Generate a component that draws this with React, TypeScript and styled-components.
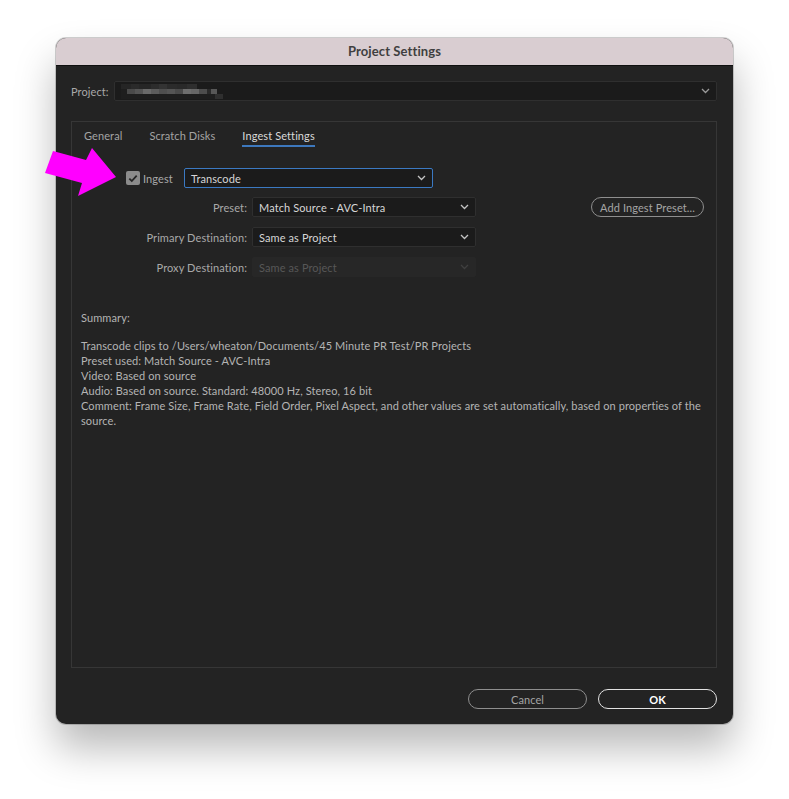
import React from 'react';
import styled, { createGlobalStyle } from 'styled-components';

const Global = createGlobalStyle`
  html, body { margin: 0; padding: 0; background: #ffffff; }
  body { font-family: Lato, "Liberation Sans", sans-serif; letter-spacing: 0.1px; }
`;

const Page = styled.div`
  position: relative;
  width: 789px;
  height: 799px;
  padding: 38px 0 0 56px;
  box-sizing: border-box;
  background: #ffffff;
`;

const Window = styled.div`
  width: 677px;
  height: 686px;
  border-radius: 10px;
  background: #232323;
  box-shadow: 0 24px 40px rgba(0, 0, 0, 0.28), 0 0 0 1px rgba(0, 0, 0, 0.18);
  overflow: hidden;
  display: flex;
  flex-direction: column;
`;

const TitleBar = styled.div`
  height: 28px;
  flex: none;
  background: #d9cdd1;
  border-bottom: 1px solid #101010;
  display: flex;
  align-items: center;
  justify-content: center;
  padding-bottom: 2px;
  box-sizing: border-box;
  font-size: 13px;
  font-weight: 700;
  color: #3f3f3f;
`;

const Body = styled.div`
  flex: 1;
  display: flex;
  flex-direction: column;
  padding: 15px 16px 15px 15px;
  min-height: 0;
`;

const ProjectRow = styled.div`
  display: flex;
  align-items: center;
  height: 20px;
  gap: 5px;
`;

const Label = styled.span<{ $w?: number }>`
  font-size: 11px;
  color: #a9a9a9;
  white-space: nowrap;
  ${(p) => (p.$w ? `width: ${p.$w}px; text-align: right; flex: none;` : '')}
`;

const Select = styled.div<{ $w?: number; $focus?: boolean; $disabled?: boolean }>`
  height: 20px;
  box-sizing: border-box;
  display: flex;
  align-items: center;
  justify-content: space-between;
  padding: 0 6px 0 6px;
  border-radius: 2px;
  font-size: 11px;
  ${(p) => (p.$w ? `width: ${p.$w}px; flex: none;` : 'flex: 1;')}
  background: ${(p) => (p.$disabled ? '#272727' : '#1b1b1b')};
  border: 1px solid ${(p) => (p.$focus ? '#3b79c2' : p.$disabled ? '#272727' : '#2f2f2f')};
  color: ${(p) => (p.$disabled ? '#575757' : '#d6d6d6')};
`;

const Blur = styled.div`
  display: flex;
  flex-direction: column;
`;

const BlurRow = styled.div`
  display: flex;
  height: 5px;
`;

const Px = styled.span<{ $c: string; $w: number }>`
  display: block;
  height: 100%;
  width: ${(p) => p.$w}px;
  background: ${(p) => p.$c};
`;

const Panel = styled.div`
  margin-top: 20px;
  flex: 1;
  border: 1px solid #363636;
  display: flex;
  flex-direction: column;
  min-height: 0;
`;

const Tabs = styled.div`
  display: flex;
  gap: 27px;
  padding-left: 12px;
`;

const Tab = styled.div<{ $active?: boolean }>`
  padding-top: 7px;
  padding-bottom: 2px;
  line-height: 14px;
  font-size: 11px;
  color: ${(p) => (p.$active ? '#dadada' : '#a3a3a3')};
  border-bottom: 2px solid ${(p) => (p.$active ? '#3d78bd' : 'transparent')};
`;

const Form = styled.div`
  margin-top: 21px;
  display: flex;
  flex-direction: column;
  gap: 10px;
`;

const Row = styled.div<{ $tight?: boolean }>`
  display: flex;
  align-items: center;
  height: 20px;
  ${(p) => (p.$tight ? 'margin-bottom: -1px;' : '')}
`;

const CheckWrap = styled.div`
  margin-left: 54px;
  display: flex;
  align-items: center;
  width: 58px;
  flex: none;
  gap: 3px;
`;

const Checkbox = styled.span`
  width: 14px;
  height: 14px;
  border-radius: 2px;
  background: #8b8b8b;
  display: flex;
  align-items: center;
  justify-content: center;
  flex: none;
`;

const FieldGap = styled.span`
  width: 5px;
  flex: none;
`;

const PillButton = styled.div<{ $primary?: boolean; $w: number }>`
  width: ${(p) => p.$w}px;
  height: 20px;
  box-sizing: border-box;
  border-radius: 10px;
  border: 1.5px solid ${(p) => (p.$primary ? '#e2e2e2' : '#8e8e8e')};
  display: flex;
  align-items: center;
  justify-content: center;
  font-size: 11px;
  font-weight: ${(p) => (p.$primary ? 700 : 400)};
  color: ${(p) => (p.$primary ? '#ffffff' : '#a5a5a5')};
  flex: none;
`;

const AddPreset = styled(PillButton)`
  margin-left: auto;
  margin-right: 12px;
`;

const Summary = styled.div`
  margin-top: 33px;
  padding: 0 9px;
  font-size: 11px;
  line-height: 15px;
  color: #b4b4b4;
`;

const SummaryTitle = styled.div`
  margin-bottom: 13px;
`;

const Footer = styled.div`
  margin-top: 21px;
  display: flex;
  justify-content: flex-end;
  gap: 11px;
`;

const Overlay = styled.svg`
  position: absolute;
  left: 0;
  top: 0;
  pointer-events: none;
`;

const Chevron = ({ color = '#c4c4c4' }: { color?: string }) => (
  <svg width="9" height="6" viewBox="0 0 9 6">
    <polyline points="1,1 4.5,4.5 8,1" fill="none" stroke={color} strokeWidth="1.3" />
  </svg>
);

const blurTop = [
  ['#252525', 10], ['#2a2a2a', 8], ['#262626', 12], ['#2c2c2c', 8], ['#333', 8], ['#2b2b2b', 10], ['#292929', 10], ['#2e2e2e', 10],
] as [string, number][];
const blurMid = [
  ['#1e1e1e', 6], ['#4a4a4a', 8], ['#555', 8], ['#6a6a6a', 8], ['#5c5c5c', 8], ['#4f4f4f', 8], ['#555', 8], ['#4a4a4a', 8], ['#6e6e6e', 8], ['#676767', 8], ['#4d4d4d', 8], ['#2a2a2a', 4], ['#575757', 6],
] as [string, number][];
const blurBot = [
  ['#1e1e1e', 94], ['#2f2f2f', 8],
] as [string, number][];

export default function App() {
  return (
    <Page>
      <Global />
      <Window>
        <TitleBar>Project Settings</TitleBar>
        <Body>
          <ProjectRow>
            <Label>Project:</Label>
            <Select>
              <Blur>
                <BlurRow>
                  {blurTop.map(([c, w], i) => (
                    <Px key={i} $c={c} $w={w} />
                  ))}
                </BlurRow>
                <BlurRow>
                  {blurMid.map(([c, w], i) => (
                    <Px key={i} $c={c} $w={w} />
                  ))}
                </BlurRow>
                <BlurRow>
                  {blurBot.map(([c, w], i) => (
                    <Px key={i} $c={c} $w={w} />
                  ))}
                </BlurRow>
              </Blur>
              <Chevron color="#9a9a9a" />
            </Select>
          </ProjectRow>

          <Panel>
            <Tabs>
              <Tab>General</Tab>
              <Tab>Scratch Disks</Tab>
              <Tab $active>Ingest Settings</Tab>
            </Tabs>

            <Form>
              <Row $tight>
                <CheckWrap>
                  <Checkbox>
                    <svg width="10" height="9" viewBox="0 0 10 9">
                      <polyline points="1.3,4.6 3.8,7 8.7,1.6" fill="none" stroke="#262626" strokeWidth="1.8" />
                    </svg>
                  </Checkbox>
                  <Label>Ingest</Label>
                </CheckWrap>
                <Select $w={249} $focus>
                  <span>Transcode</span>
                  <Chevron />
                </Select>
              </Row>
              <Row>
                <Label $w={175}>Preset:</Label>
                <FieldGap />
                <Select $w={224}>
                  <span>Match Source - AVC-Intra</span>
                  <Chevron />
                </Select>
                <AddPreset $w={113}>Add Ingest Preset...</AddPreset>
              </Row>
              <Row>
                <Label $w={175}>Primary Destination:</Label>
                <FieldGap />
                <Select $w={224}>
                  <span>Same as Project</span>
                  <Chevron />
                </Select>
              </Row>
              <Row>
                <Label $w={175}>Proxy Destination:</Label>
                <FieldGap />
                <Select $w={224} $disabled>
                  <span>Same as Project</span>
                  <Chevron color="#3f3f3f" />
                </Select>
              </Row>
            </Form>

            <Summary>
              <SummaryTitle>Summary:</SummaryTitle>
              <div>Transcode clips to /Users/wheaton/Documents/45 Minute PR Test/PR Projects</div>
              <div>Preset used: Match Source - AVC-Intra</div>
              <div>Video: Based on source</div>
              <div>Audio: Based on source. Standard: 48000 Hz, Stereo, 16 bit</div>
              <div>
                Comment: Frame Size, Frame Rate, Field Order, Pixel Aspect, and other values are set automatically, based on properties of the source.
              </div>
            </Summary>
          </Panel>

          <Footer>
            <PillButton $w={119}>Cancel</PillButton>
            <PillButton $w={119} $primary>OK</PillButton>
          </Footer>
        </Body>
      </Window>

      <Overlay width="789" height="799" viewBox="0 0 789 799">
        <polygon points="53,151 86,160 92,148 116,177 78,196 82,183 45,173" fill="#ff00ff" />
      </Overlay>
    </Page>
  );
}
